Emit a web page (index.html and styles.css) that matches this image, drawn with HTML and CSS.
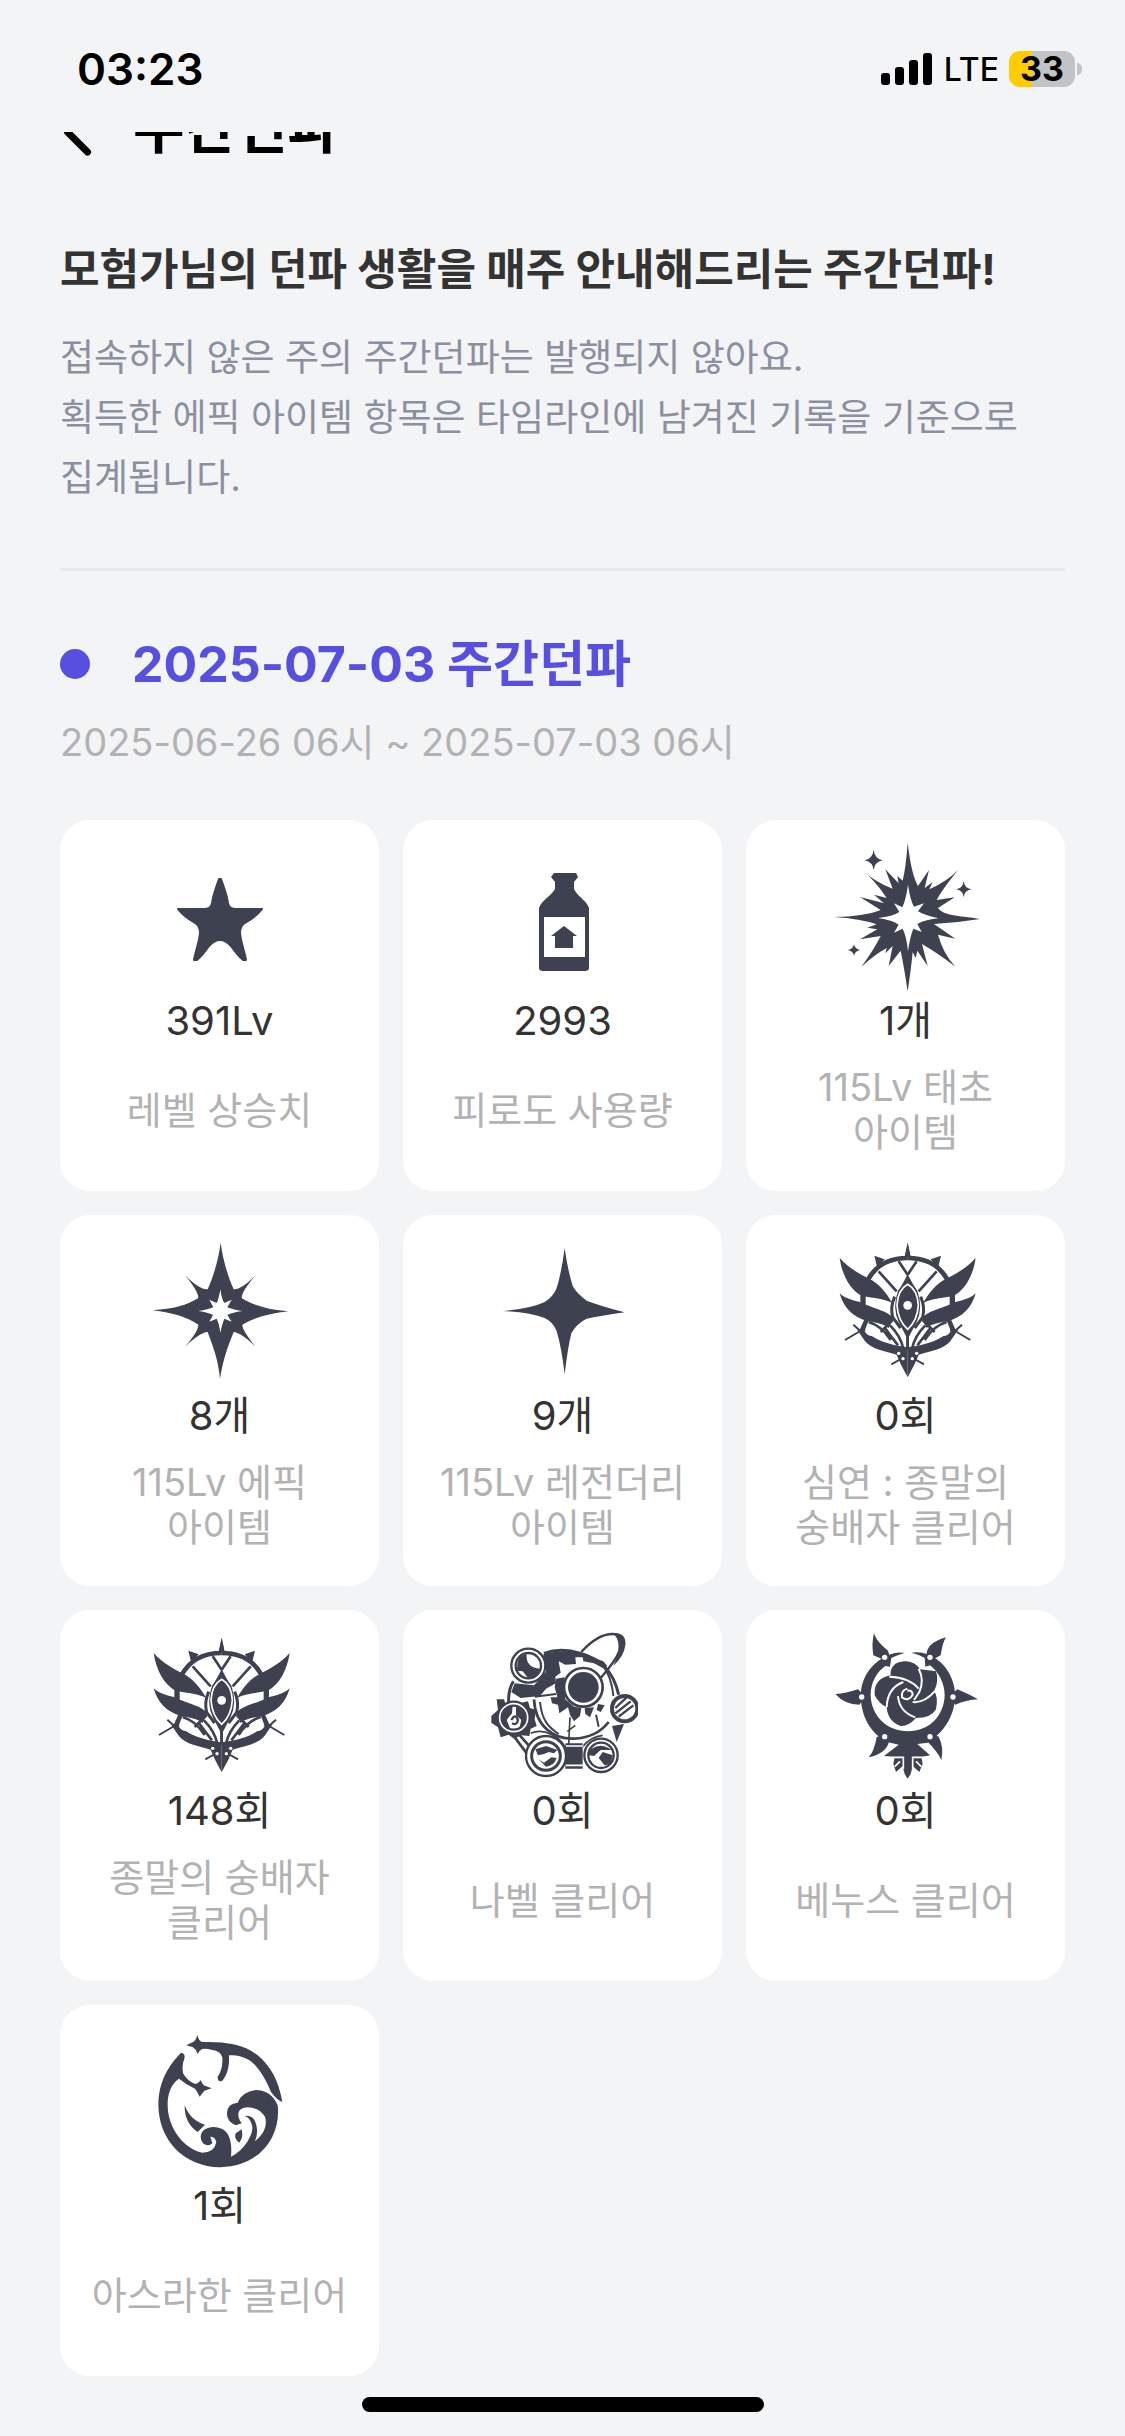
FILE: index.html
```html
<!DOCTYPE html>
<html lang="ko">
<head>
<meta charset="utf-8">
<meta name="viewport" content="width=device-width, initial-scale=1">
<title>주간던파</title>
<link rel="stylesheet" href="styles.css">
</head>
<body>
<svg class="defs" aria-hidden="true">
  <defs>
    <g id="crest-half">
      <path d="M117 84C142 112 176 132 205 146C232 158 256 186 274 218C252 208 222 204 184 198C148 180 124 134 117 84Z"/>
      <path d="M117 190C140 212 168 210 196 224C228 238 258 242 278 264L264 294C248 280 226 278 196 272C158 262 128 232 117 190Z"/>
      <path d="M170 300L190 298C222 332 262 344 321 352L321 442L300 402L288 374C248 362 214 358 192 332Z"/>
      <path d="M179 190H195V226H179ZM192 266H206L192 302H176Z"/>
      <path d="M321 38L330 82H312ZM221 77L252 88L230 114Z"/>
      <g fill="none" stroke="#3e4150">
        <path stroke-width="14" d="M200 152Q236 84 321 84"/>
        <path stroke-width="8" d="M234 124L288 184M294 94L321 134"/>
        <path stroke-width="9" d="M282 200Q268 232 276 262L300 294"/>
        <path stroke-width="8" d="M276 270L240 306M268 286Q300 318 308 356M250 290Q272 320 292 346M204 276Q244 288 270 330M321 308V360"/>
        <path stroke-width="6" d="M133 330L184 300M158 284L180 304M272 403L306 384"/>
      </g>
      <path fill="#fff" d="M192 304Q210 300 218 318Q200 320 192 304Z"/>
      <g fill="#fff"><circle cx="294" cy="370" r="5"/><circle cx="307" cy="386" r="5"/></g>
    </g>
    <symbol id="crest" viewBox="91 18 450 450">
      <use href="#crest-half"/>
      <use href="#crest-half" transform="translate(642 0) scale(-1 1)"/>
      <path d="M321 132Q336 164 350 182Q368 232 348 276L321 328L294 276Q274 232 292 182Q306 164 321 132Z"/>
      <path fill="none" stroke="#fff" stroke-width="5" d="M321 163Q351 180 353 226Q350 272 321 298Q292 272 289 226Q291 180 321 163Z"/>
      <circle fill="#fff" cx="321" cy="226" r="13"/>
    </symbol>
  </defs>
</svg>

<div class="status">
  <time class="clock">03:23</time>
  <div class="status-right">
    <svg class="signal" viewBox="0 0 51 32" aria-label="신호">
      <rect x="0" y="20" width="9" height="12" rx="3"/><rect x="14" y="14" width="9" height="18" rx="3"/><rect x="28" y="7" width="9" height="25" rx="3"/><rect x="42" y="0" width="9" height="32" rx="3"/>
    </svg>
    <span class="network">LTE</span>
    <span class="battery">33</span>
    <span class="battery-cap"></span>
  </div>
</div>

<header class="topbar">
  <button class="back" aria-label="뒤로">
    <svg viewBox="0 0 30 48"><path d="M26 4L6 24L26 44" fill="none" stroke="#000" stroke-width="7" stroke-linecap="round" stroke-linejoin="round"/></svg>
  </button>
  <h1 class="page-title">주간던파</h1>
</header>

<main class="content">
  <section class="intro">
    <h2 class="intro-title">모험가님의 던파 생활을 매주 안내해드리는 주간던파!</h2>
    <p class="intro-text">접속하지 않은 주의 주간던파는 발행되지 않아요.<br>획득한 에픽 아이템 항목은 타임라인에 남겨진 기록을 기준으로 집계됩니다.</p>
  </section>

  <section class="report">
    <h2 class="report-title">2025-07-03 주간던파</h2>
    <p class="period">2025-06-26 06시 ~ 2025-07-03 06시</p>
    <ul class="cards">
      <li class="card">
        <svg class="icon" viewBox="145 841 150 150"><path stroke="#3e4150" stroke-width="2" stroke-linejoin="round" d="M219 879H221C224 887 227 896 228 903Q229 909 235 909H262Q257 916 245 923Q240 926 240 933C241 943 245 953 246 960H243Q238 956 231 946Q220 934 209 946Q202 956 197 960H194C195 953 199 943 200 933Q200 926 195 923Q183 916 178 909H205Q211 909 212 903C213 896 216 887 219 879Z"/></svg>
        <strong class="value">391Lv</strong><span class="label">레벨 상승치</span>
      </li>
      <li class="card">
        <svg class="icon" viewBox="488 841 150 150"><path d="M554 873H576L578 877L574 882V889C577 896 587 901 589 908V968Q589 971 585 971H543Q539 971 539 968V908C541 901 551 896 555 889V882L551 877Z"/><path fill="#fff" d="M544 917H585V957H544Z"/><path d="M564 926L577 936H573V948H555V936H551Z"/></svg>
        <strong class="value">2993</strong><span class="label">피로도 사용량</span>
      </li>
      <li class="card">
        <svg class="icon" viewBox="91 63 450 450"><path fill-rule="evenodd" d="M321 68Q332 164 352 198L385 150L372 204L396 186L386 208Q440 184 472 150Q422 212 408 240L462 232L412 264C430 290 490 288 538 297Q470 308 400 312L464 356L412 344Q428 402 464 440Q412 400 364 372L381 438L350 392L345 414L336 396Q332 440 321 514Q310 440 300 392L264 438L276 378L254 400L258 384Q222 404 182 440Q218 392 240 348L178 358L230 328L200 323L228 313Q180 296 100 291Q190 290 240 270L178 231L250 250L220 224L258 234Q220 176 182 150Q230 190 276 206L254 148L294 190L290 168L306 182Q316 140 321 68ZM322 194Q316 238 305 262L280 250L296 276Q276 290 232 294Q276 300 294 314L280 338L306 326Q318 350 322 394Q328 350 338 326L363 336L350 312Q376 298 414 295Q372 286 352 274L370 250L340 260Q328 238 322 194Z"/>
          <path d="M219 89Q222 116 246 121Q222 126 219 150Q216 126 192 121Q216 116 219 89ZM489 184Q491 204 512 208Q491 211 489 232Q487 211 467 208Q487 204 489 184ZM160 373Q162 387 179 390Q162 393 160 408Q158 393 141 390Q158 387 160 373Z"/></svg>
        <strong class="value">1개</strong><span class="label">115Lv 태초 아이템</span>
      </li>
      <li class="card">
        <svg class="icon" viewBox="14 18 450 450"><path fill-rule="evenodd" d="M241 38C248 90 262 138 280 178Q302 180 346 136Q304 184 304 204C340 228 390 240 444 244C390 250 340 262 306 284Q306 302 346 350Q302 308 280 306C262 350 248 390 239 446C234 390 218 350 202 306Q178 308 134 350Q174 304 174 284C140 262 100 248 36 241C100 236 140 226 174 204Q174 184 134 136Q178 180 202 178C220 138 234 90 241 38ZM240 178Q235 208 229 219L207 209L219 232Q204 239 174 243Q204 247 218 255L207 275L229 266Q236 280 240 308Q246 280 252 266L274 275L261 255Q276 247 306 243Q276 239 261 232L274 209L252 219Q244 208 240 178Z"/></svg>
        <strong class="value">8개</strong><span class="label">115Lv 에픽 아이템</span>
      </li>
      <li class="card">
        <svg class="icon" viewBox="1042 18 450 450"><path d="M1272 54C1280 110 1288 140 1296 168Q1308 190 1338 212Q1380 228 1452 247Q1376 258 1338 266Q1308 280 1292 310Q1282 350 1272 432Q1262 350 1248 304Q1238 276 1212 264Q1170 248 1086 243Q1170 236 1212 216Q1238 200 1248 174Q1262 130 1272 54Z"/></svg>
        <strong class="value">9개</strong><span class="label">115Lv 레전더리 아이템</span>
      </li>
      <li class="card">
        <svg class="icon"><use href="#crest"/></svg>
        <strong class="value">0회</strong><span class="label">심연 : 종말의 숭배자 클리어</span>
      </li>
      <li class="card">
        <svg class="icon"><use href="#crest"/></svg>
        <strong class="value">148회</strong><span class="label">종말의 숭배자 클리어</span>
      </li>
      <li class="card">
        <svg class="icon" viewBox="22 33 450 450">
          <g fill="none" stroke="#3e4150">
            <path stroke-width="9" d="M190 100Q240 82 300 100Q392 124 414 224M98 184Q82 210 84 250"/>
            <path stroke-width="8" d="M98 346L150 416M112 340L160 394"/>
          </g>
          <path d="M188 102Q250 86 300 100L368 124L380 138L366 144L340 130L308 124L306 112L284 112L286 132L254 134L234 124L240 158L224 170L226 190L196 206L178 228L120 234L92 216L102 190L160 196L196 156Z"/>
          <g fill="none" stroke="#3e4150">
            <path stroke-width="8" d="M160 238C164 320 220 358 280 356C332 354 362 334 384 306"/>
            <path stroke-width="6" d="M178 246C184 310 212 326 234 342M162 230L226 222M346 120Q390 148 398 228M346 284L354 320"/>
            <path stroke-width="5" d="M268 292L264 374M284 316L260 334M150 340Q180 326 214 344Q250 362 262 400M306 380Q330 350 366 346"/>
          </g>
          <path d="M226 176L252 172L254 238L280 260L302 264L298 288L280 304L268 284L262 262L236 280L232 254L214 250L210 232L230 232L222 202ZM312 264L340 262L328 292L314 282ZM352 252L372 256L360 276L348 270Z"/>
          <circle cx="308" cy="202" r="58" fill="#fff" stroke="#3e4150" stroke-width="8"/>
          <circle cx="308" cy="202" r="46"/>
          <path fill="none" stroke="#3e4150" stroke-width="7" d="M302 96Q360 32 412 44Q448 74 360 174"/>
          <path d="M396 40Q438 36 434 76Q430 108 398 138Q430 66 396 40Z"/>
          <path d="M254 370H306V446H254ZM394 318L430 312L408 366Z"/>
          <path fill="none" stroke="#fff" stroke-width="5" d="M256 378H308M256 436H308"/>
          <path d="M48 238H70L74 252L96 242L116 250L142 244L148 264L166 270L162 298L168 318L150 326L146 348L122 346L100 356L84 344L60 352L52 322L32 308L32 288L52 270Z"/>
          <g fill="#fff" stroke="#3e4150" stroke-width="7">
            <circle cx="143" cy="137" r="51"/><circle cx="99" cy="293" r="48"/><circle cx="196" cy="408" r="60"/><circle cx="361" cy="406" r="50"/><circle cx="432" cy="266" r="38" stroke-width="12"/>
            <circle cx="143" cy="137" r="38"/><circle cx="99" cy="293" r="36"/><circle cx="196" cy="408" r="43" stroke-width="9"/><circle cx="361" cy="406" r="38"/>
          </g>
          <path d="M110 138Q108 108 138 102Q134 142 178 146Q170 172 142 174L126 154L108 152ZM76 268L96 256L94 280L78 300L88 324Q66 318 64 294Q64 280 76 268ZM106 258Q132 270 134 292Q132 316 116 324L122 300L106 286Z"/>
          <path d="M164 388L196 378L230 390L220 400L204 396L190 402L172 406ZM174 418L190 428L212 412L228 414Q220 438 196 440ZM330 388Q360 366 392 390L360 390L340 408L324 406ZM354 414L366 396L396 406L390 432L372 436Z"/>
          <path fill="none" stroke="#3e4150" stroke-width="7" d="M404 264L438 232M404 280L450 244M414 290L458 256M92 300Q104 278 112 300Q108 318 94 310"/>
        </svg>
        <strong class="value">0회</strong><span class="label">나벨 클리어</span>
      </li>
      <li class="card">
        <svg class="icon" viewBox="31 33 450 450">
          <path fill-rule="evenodd" d="M210 103Q230 94 252 99Q232 104 212 114L208 140L194 138C168 156 150 188 150 226C152 290 200 334 262 334C324 334 370 290 372 226C372 190 354 156 328 136L314 140L312 114Q292 102 272 98Q300 94 320 103C370 122 402 170 404 228C400 296 366 338 322 368L290 372L328 406L302 412L306 432L296 456L276 438L270 462L261 476L252 462L246 438L226 456L218 432L222 412L190 408L234 374L200 366C150 340 122 292 120 228C122 170 152 126 210 103Z"/>
          <path d="M160 40Q168 66 202 92L208 112L186 118L158 106Q152 70 160 40ZM376 52Q366 66 360 106L338 118L318 108Q314 70 376 52ZM44 222Q76 220 112 208L134 230L116 254Q72 254 44 222ZM472 238Q440 220 410 208L386 230L404 254Q436 240 472 238ZM144 412Q160 396 168 352L192 338L206 360Q200 400 144 412ZM362 420Q352 396 318 362L330 338L354 350Q370 380 362 420Z"/>
          <path d="M210 154Q218 122 256 124Q284 126 298 148L346 154Q356 184 340 214Q354 230 346 268Q332 294 286 294Q262 320 240 318Q202 306 198 262Q176 252 162 226Q158 176 210 166Z"/>
          <g fill="none" stroke="#fff" stroke-width="6">
            <path d="M206 170Q266 172 294 206M294 146Q312 180 296 216L280 240M342 214Q310 250 276 246M284 292Q236 276 232 228M198 262Q200 204 248 186M260 206Q240 212 244 232Q264 246 276 224Q276 210 260 212"/>
            <path stroke-width="5" d="M192 412H248V446M332 412H276V446M238 424L222 440M286 424L302 440"/>
          </g>
          <g fill="#fff"><circle cx="192" cy="112" r="8"/><circle cx="328" cy="112" r="8"/><circle cx="123" cy="231" r="8"/><circle cx="397" cy="231" r="8"/><circle cx="192" cy="350" r="8"/><circle cx="328" cy="350" r="8"/></g>
        </svg>
        <strong class="value">0회</strong><span class="label">베누스 클리어</span>
      </li>
      <li class="card">
        <svg class="icon" viewBox="14 18 450 450">
          <path d="M171 44Q174 62 186 66C250 64 314 72 352 106C392 140 414 180 426 246Q410 240 392 216C376 176 352 136 326 120Q300 104 266 106C268 140 260 166 246 182Q232 188 232 170Q248 148 246 112Q240 92 216 90Q192 84 184 88Q174 94 172 102Q168 88 158 82L138 76L158 66Q168 60 171 44Z"/>
          <path d="M122 98Q136 100 132 116Q124 134 128 160Q142 184 164 192Q176 190 180 180L190 196L214 205L192 212L178 230Q172 216 164 206Q138 194 116 176C84 198 78 240 84 280C94 340 140 390 186 398Q222 398 228 366Q224 350 210 350L216 370Q204 382 188 370Q174 350 188 332Q212 314 244 326Q278 342 272 410Q302 396 322 364Q342 330 334 312Q326 290 312 288Q342 284 348 316Q354 340 344 364Q386 330 374 290Q356 262 322 262C296 262 284 282 304 310L286 316Q258 304 260 278Q262 250 292 248Q304 216 346 210Q392 210 412 256C422 340 368 438 240 442C130 440 54 360 54 252C56 178 88 134 122 98Z"/>
          <path d="M133 256Q150 302 194 314L172 336Q132 310 133 256ZM304 328Q310 356 296 368Q280 356 286 340Z"/>
        </svg>
        <strong class="value">1회</strong><span class="label">아스라한 클리어</span>
      </li>
    </ul>
  </section>
</main>
<footer class="home"><div class="home-bar"></div></footer>
</body>
</html>
```
FILE: styles.css
```css
* {
  box-sizing: border-box;
}

body {
  margin: 0;
  background: #f3f4f6;
  color: #333;
  font-family: Inter, "Noto Sans CJK KR", sans-serif;
  word-break: keep-all;
}

h1, h2, p, ul {
  margin: 0;
  padding: 0;
}

.defs {
  display: block;
  width: 0;
  height: 0;
}

.status {
  display: flex;
  justify-content: space-between;
  align-items: center;
  height: 132px;
  padding: 6px 43px 0 77px;
  color: #000;
}

.clock {
  font-size: 44px;
  font-weight: 600;
}

.status-right {
  display: flex;
  align-items: center;
}

.signal {
  width: 51px;
  height: 32px;
  margin-right: 12px;
}

.network {
  margin-right: 10px;
  font-size: 32px;
  font-weight: 500;
}

.battery {
  width: 66px;
  height: 36px;
  border-radius: 11px;
  background: linear-gradient(90deg, #fc0 35%, #c2c3c5 35%);
  font-size: 34px;
  font-weight: 700;
  line-height: 36px;
  text-align: center;
}

.battery-cap {
  width: 5px;
  height: 12px;
  margin-left: 2px;
  border-radius: 0 6px 6px 0;
  background: #c2c3c5;
}

/* The bar is scrolled up under the status bar: only its foot shows. */
.topbar {
  display: flex;
  align-items: flex-end;
  gap: 40px;
  height: 30px;
  padding: 0 60px;
  overflow: hidden;
  color: #000;
}

.back {
  flex: none;
  padding: 0 0 6px;
  border: 0;
  background: none;
}

.back svg {
  display: block;
  width: 33px;
  height: 48px;
}

.page-title {
  font-size: 56px;
  font-weight: 700;
  line-height: 68px;
}

.content {
  padding: 0 60px;
}

.intro {
  padding: 77px 0 60px;
  border-bottom: 3px solid #e8e9eb;
}

.intro-title {
  margin-bottom: 29px;
  font-size: 43px;
  font-weight: 700;
  line-height: 60px;
}

.intro-text {
  color: #8b90a0;
  font-size: 37px;
  line-height: 60px;
}

.report {
  padding-top: 58px;
}

.report-title {
  display: flex;
  align-items: center;
  gap: 42px;
  color: #574fe0;
  font-size: 50px;
  font-weight: 700;
  line-height: 70px;
}

.report-title::before {
  content: "";
  width: 30px;
  height: 30px;
  border-radius: 50%;
  background: #574fe0;
}

.period {
  margin: 13px 0 48px;
  color: #b2b2b2;
  font-size: 38px;
  line-height: 60px;
}

.cards {
  display: grid;
  grid-template-columns: repeat(3, 1fr);
  gap: 24px;
  list-style: none;
}

.card {
  display: flex;
  flex-direction: column;
  align-items: center;
  padding: 21px 30px 36px;
  border-radius: 30px;
  background: #fff;
  text-align: center;
}

.icon {
  width: 150px;
  height: 150px;
  fill: #3e4150;
}

.value {
  font-size: 40px;
  font-weight: 400;
  line-height: 60px;
}

.label {
  display: flex;
  align-items: center;
  min-height: 90px;
  margin-top: 14px;
  color: #b2b2b2;
  font-size: 38px;
  line-height: 45px;
}

.home {
  display: flex;
  justify-content: center;
  padding: 21px 60px 24px;
}

.home-bar {
  width: 40%;
  height: 15px;
  border-radius: 8px;
  background: #000;
}
```
